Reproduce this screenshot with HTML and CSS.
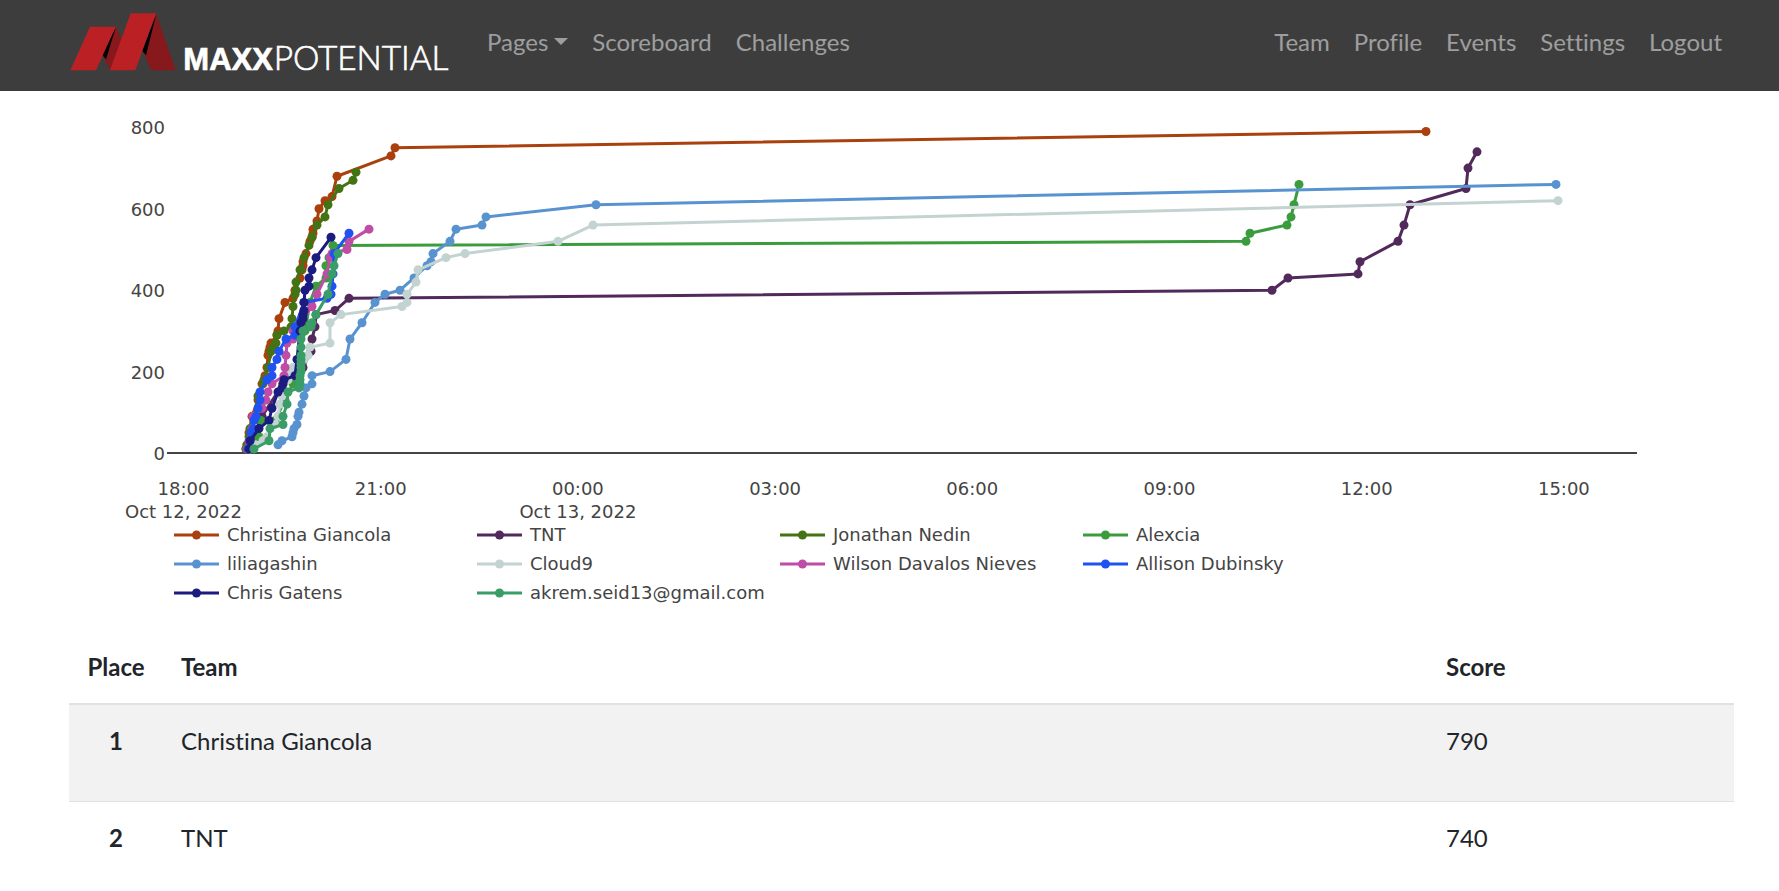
FILE: index.html
```html
<!DOCTYPE html>
<html lang="en">
<head>
<meta charset="utf-8">
<meta name="viewport" content="width=device-width, initial-scale=1">
<title>Scoreboard - MAXX Potential</title>
<link rel="stylesheet" href="styles.css">
</head>
<body>
<header class="navbar">
  <a class="brand" href="#">
    <svg class="brand-logo" viewBox="60 39 1140 174" role="img" aria-label="MAXX Potential">
      <path class="logo-dark" d="M197 80 217 120 180 210 158 166Z"/>
      <path class="logo-black" d="M197 84 168 178 156 164Z"/>
      <path class="logo-red" d="M120 80H197L138 211H61Z"/>
      <path class="logo-dark" d="M318 40 377 211H303L280 155Z"/>
      <path class="logo-black" d="M318 46 288 166 276 152Z"/>
      <path class="logo-red" d="M242 40H318L256 211H180Z"/>
      <text class="logo-bold" x="400" y="210">MAXX</text>
      <text class="logo-light" x="671" y="210">POTENTIAL</text>
    </svg>
  </a>
  <nav class="nav nav-main" aria-label="Main">
    <button class="nav-link" type="button" aria-haspopup="true">Pages<span class="caret"></span></button>
    <a class="nav-link" href="#">Scoreboard</a>
    <a class="nav-link" href="#">Challenges</a>
  </nav>
  <nav class="nav" aria-label="Account">
    <a class="nav-link" href="#">Team</a>
    <a class="nav-link" href="#">Profile</a>
    <a class="nav-link" href="#">Events</a>
    <a class="nav-link" href="#">Settings</a>
    <a class="nav-link" href="#">Logout</a>
  </nav>
</header>
<main class="container">
  <section class="score-graph" aria-label="Top 10 teams">
    <svg class="chart" viewBox="69 91 1665 429" id="chart"></svg>
    <ul class="legend" id="legend"></ul>
  </section>
  <table class="scores">
    <thead>
      <tr><th class="place" scope="col">Place</th><th scope="col">Team</th><th class="score" scope="col">Score</th></tr>
    </thead>
    <tbody>
      <tr><th class="place" scope="row">1</th><td>Christina Giancola</td><td>790</td></tr>
      <tr><th class="place" scope="row">2</th><td>TNT</td><td>740</td></tr>
    </tbody>
  </table>
</main>
<script src="chart.js"></script>
</body>
</html>
```
FILE: styles.css
```css
* { box-sizing: border-box; }

body {
  margin: 0;
  background: #fff;
  color: #212529;
  font: 24px/36px Lato, sans-serif;
  font-variant-ligatures: none;
}

.navbar {
  display: flex;
  align-items: flex-start;
  padding: 13px 45px 20px 70px;
  background: #3d3d3d;
}

.brand { margin-right: 25px; }
.brand-logo { display: block; width: 380px; height: 58px; overflow: visible; }
.logo-red { fill: #bb2025; }
.logo-dark { fill: #87191c; }
.logo-black { fill: #000; }
.logo-bold { fill: #fff; stroke: #fff; stroke-width: 2; font: bold 93px "Liberation Sans", sans-serif; }
.logo-light { fill: #fff; stroke: #fff; stroke-width: 2; font: 300 100px Lato, sans-serif; }

.nav { display: flex; padding-top: 11px; }
.nav-main { flex: 1; }

.nav-link {
  padding: 0 12px;
  border: 0;
  background: none;
  color: rgba(255, 255, 255, 0.5);
  font: inherit;
  font-variant-ligatures: none;
  text-decoration: none;
}

.caret {
  display: inline-block;
  margin-left: 6px;
  border: 7px solid transparent;
  border-top-color: currentColor;
  border-bottom: 0;
  vertical-align: 6px;
}

.container { padding: 0 45px 0 69px; }

.score-graph {
  margin-bottom: 24px;
  color: #444;
  font: 18px/29px "DejaVu Sans", Verdana, sans-serif;
}

.chart { display: block; width: 100%; overflow: visible; }
.chart text { fill: #444; }
.axis { stroke: #444; stroke-width: 2; }
.tick-x { text-anchor: middle; }
.tick-y { text-anchor: end; }
.trace { fill: none; stroke-width: 3; stroke-linejoin: round; }

.legend {
  display: grid;
  grid-template-columns: repeat(4, 303px);
  margin: 0;
  padding: 0 0 0 105px;
  list-style: none;
}

.legend li { display: flex; align-items: center; gap: 8px; white-space: nowrap; }
.swatch { width: 45px; height: 10px; }

.scores { width: 100%; border-collapse: separate; border-spacing: 0; }
.scores th, .scores td { padding: 18px; text-align: left; vertical-align: top; }
.scores thead th { border-bottom: 2px solid #dee2e6; }
.scores .place { width: 94px; text-align: center; }
.scores .score { width: 306px; }
.scores tbody th, .scores tbody td { padding-bottom: 42px; }
.scores tbody tr + tr > * { border-top: 1px solid #dee2e6; }
.scores tbody tr:nth-child(odd) { background: #f2f2f2; }
```
FILE: chart.js
```js
const traces = [
  { name: "Christina Giancola", color: "#aa400d", data: [246,10,247,20,249,50,252,90,258,130,262,170,265,190,267,210,268,240,269,250,270,260,271,270,277,290,278,300,279,330,285,370,293,380,295,400,300,430,302,450,303,460,303,470,306,490,310,520,312,530,313,540,313,550,317,570,319,600,325,620,332,630,337,680,391,730,395,750,1426,790] },
  { name: "TNT", color: "#52295b", data: [249,10,253,40,262,90,283,170,303,210,311,250,312,280,315,310,316,340,335,350,349,380,1272,400,1288,430,1358,440,1360,470,1398,520,1404,560,1410,610,1466,650,1468,700,1477,740] },
  { name: "Jonathan Nedin", color: "#447314", data: [246,10,247,20,249,40,250,60,254,90,258,140,263,170,264,180,268,210,271,250,273,260,276,270,277,290,284,300,291,310,292,330,293,360,295,390,296,400,296,420,300,450,301,450,304,480,309,510,312,530,317,560,325,580,328,610,339,650,353,670,356,690] },
  { name: "Alexcia", color: "#3b9c3d", data: [249,10,252,20,259,40,261,80,275,80,285,130,293,170,295,200,305,300,310,370,316,410,326,430,326,460,329,480,333,510,1246,520,1250,540,1287,560,1291,580,1294,610,1299,660] },
  { name: "liliagashin", color: "#5893d0", data: [278,20,282,30,292,40,293,50,294,60,297,70,298,90,299,100,302,120,304,140,306,160,312,170,312,190,330,200,346,230,350,280,362,320,375,370,385,390,400,400,414,430,427,460,431,470,433,490,450,520,456,550,482,560,486,580,596,610,1556,660] },
  { name: "Cloud9", color: "#c3d3d1", data: [250,10,255,20,263,30,267,40,275,70,278,90,280,120,282,140,288,180,290,200,293,210,304,230,308,240,310,260,330,270,330,320,341,340,402,360,407,370,407,390,416,420,418,450,446,480,465,490,558,520,593,560,1558,620] },
  { name: "Wilson Davalos Nieves", color: "#bf4ca5", data: [247,10,249,30,252,60,253,90,262,110,266,130,268,150,272,170,284,190,285,210,286,240,287,270,293,280,293,300,312,360,317,390,327,440,330,480,332,490,347,500,349,520,369,550] },
  { name: "Allison Dubinsky", color: "#1f52f0", data: [248,10,250,30,251,50,253,60,254,80,256,90,258,110,260,130,260,150,267,180,272,190,272,210,277,230,279,250,286,280,295,290,295,310,304,370,327,380,331,390,332,410,333,440,334,490,349,540] },
  { name: "Chris Gatens", color: "#1c1b80", data: [249,10,250,30,259,60,269,80,272,110,278,150,282,160,283,170,284,180,295,190,297,230,300,300,301,320,303,330,303,340,304,350,304,370,305,400,309,410,309,430,312,450,316,480,331,530] },
  { name: "akrem.seid13@gmail.com", color: "#3a9d68", data: [254,10,269,30,270,60,283,70,283,90,287,120,288,150,299,160,300,170,300,180,300,190,301,200,301,210,301,220,301,230,301,240,301,260,301,280,303,300,311,310,312,320,316,340,328,390,332,440,334,460,338,490] }
];

const scoreY = score => 453 - score * 0.407;
const xTicks = ["18:00", "21:00", "00:00", "03:00", "06:00", "09:00", "12:00", "15:00"];
const dates = { 0: "Oct 12, 2022", 2: "Oct 13, 2022" };

let svg = '<path class="axis" d="M167 453H1637"/>';
for (const v of [0, 200, 400, 600, 800]) {
  svg += `<text class="tick-y" x="165" y="${scoreY(v) + 7}">${v}</text>`;
}
xTicks.forEach((label, i) => {
  const x = 183.5 + i * 197.2;
  svg += `<text class="tick-x" x="${x}" y="495">${label}</text>`;
  if (dates[i]) svg += `<text class="tick-x" x="${x}" y="518">${dates[i]}</text>`;
});

let legend = "";
for (const t of traces) {
  let line = "";
  let dots = "";
  for (let i = 0; i < t.data.length; i += 2) {
    const x = t.data[i];
    const y = scoreY(t.data[i + 1]);
    line += `${x},${y} `;
    dots += `<circle cx="${x}" cy="${y}" r="4.5"/>`;
  }
  svg += `<polyline class="trace" stroke="${t.color}" points="${line}"/><g fill="${t.color}">${dots}</g>`;
  legend += `<li><svg class="swatch" viewBox="0 0 45 10" fill="${t.color}" aria-hidden="true"><path d="M0 3.5H45V6.5H0Z"/><circle cx="22.5" cy="5" r="4.5"/></svg>${t.name}</li>`;
}
document.getElementById("chart").innerHTML = svg;
document.getElementById("legend").innerHTML = legend;
```
